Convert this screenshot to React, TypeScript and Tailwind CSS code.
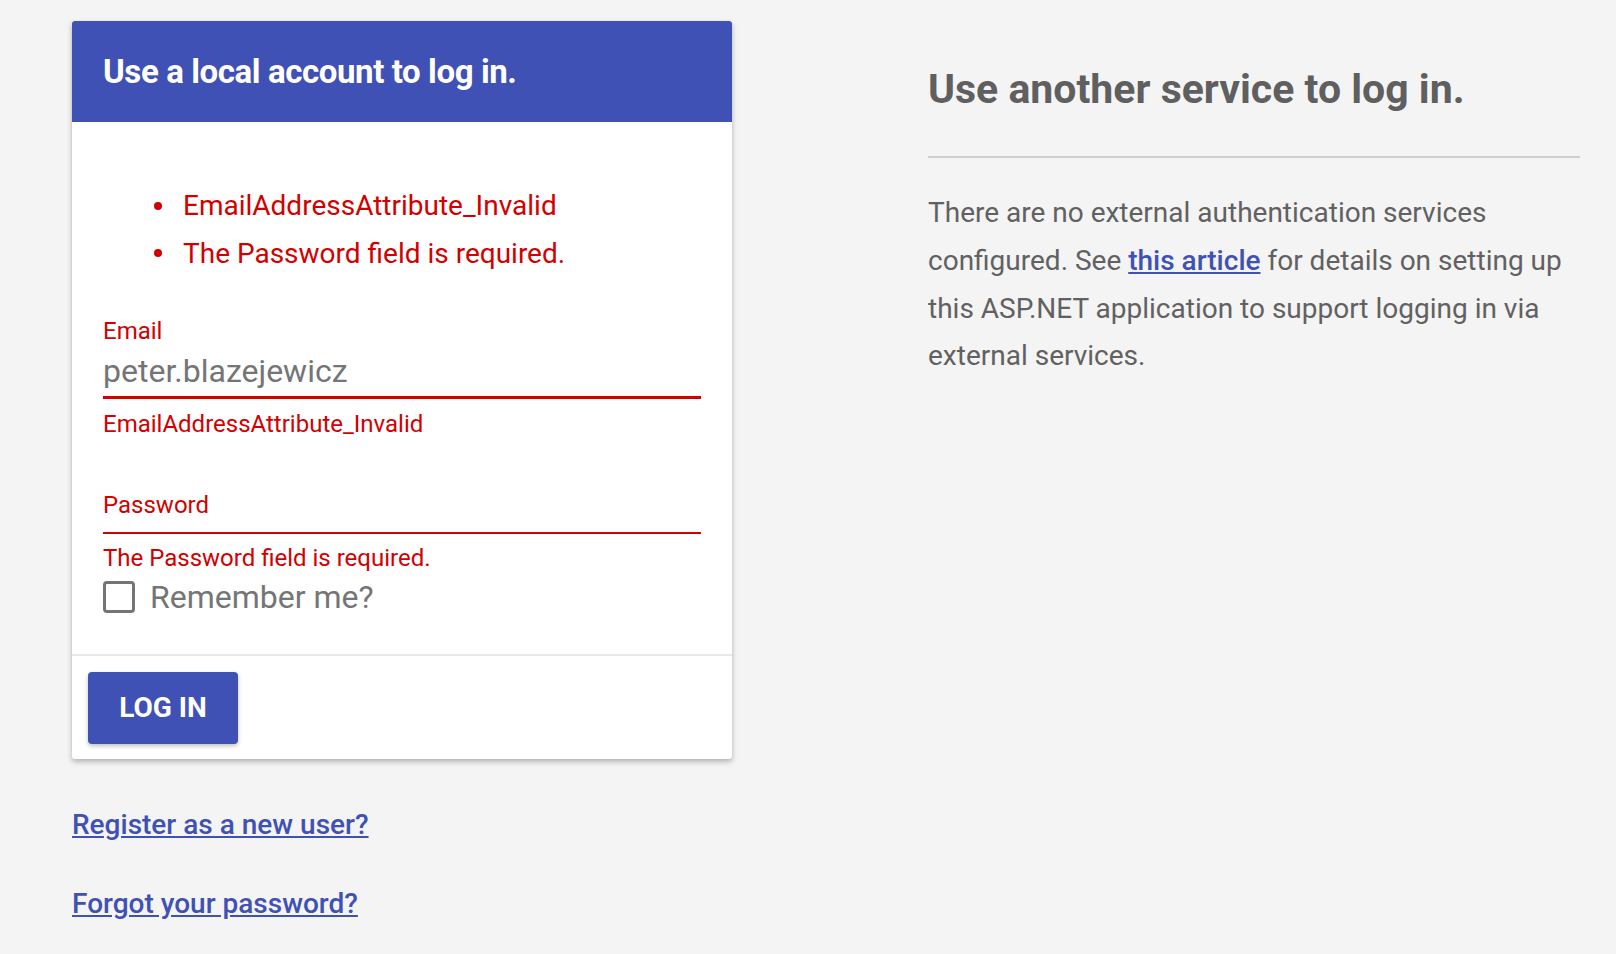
import React, { useEffect, useRef, useState } from 'react';

const errors = ['EmailAddressAttribute_Invalid', 'The Password field is required.'];

export default function App() {
  const [email, setEmail] = useState('peter.blazejewicz');
  const [password, setPassword] = useState('');
  const [remember, setRemember] = useState(false);
  const emailRef = useRef<HTMLInputElement>(null);

  useEffect(() => {
    const el = emailRef.current;
    if (el) {
      el.focus();
      el.setSelectionRange(el.value.length, el.value.length);
    }
  }, []);

  return (
    <div className="min-h-[954px] bg-[#f4f4f4] font-['Roboto',sans-serif]">
      <div className="flex pl-[72px] pt-[21px]">
        {/* local login */}
        <div className="w-[660px] shrink-0">
          <form
            onSubmit={(e) => e.preventDefault()}
            className="bg-white rounded-[3px] shadow-[0_3px_6px_rgba(0,0,0,0.18),0_2px_4px_rgba(0,0,0,0.12)]"
          >
            <div className="h-[101px] bg-[#3f51b5] rounded-t-[3px] flex items-center px-[31px]">
              <h4 className="text-white text-[33px] leading-[40px] font-bold tracking-[-0.4px]">Use a local account to log in.</h4>
            </div>

            <div className="px-[31px] pt-[60px] pb-[40px]">
              <ul className="text-[#d20000] text-[28px] leading-[47.5px]">
                {errors.map((msg) => (
                  <li key={msg} className="flex items-center">
                    <span className="ml-[51px] mr-[21px] w-[8px] h-[8px] rounded-full bg-[#d20000] shrink-0" />
                    {msg}
                  </li>
                ))}
              </ul>

              <div className="mt-[40px] w-[598px]">
                <label className="block text-[#d20000] text-[24px] leading-[28px]">Email</label>
                <div className="relative mt-[6px]">
                  <input
                    ref={emailRef}
                    value={email}
                    onChange={(e) => setEmail(e.target.value)}
                    className="peer block w-full text-[32px] leading-[40px] h-[48px] text-[#757575] caret-[#757575] outline-none border-b-[3px] border-[#d20000] pb-[5px]"
                  />
                </div>
                <p className="text-[#d20000] text-[24px] leading-[28px] mt-[11px]">EmailAddressAttribute_Invalid</p>
              </div>

              <div className="mt-[53px] w-[598px]">
                <label className="block text-[#d20000] text-[24px] leading-[28px]">Password</label>
                <input
                  type="password"
                  value={password}
                  onChange={(e) => setPassword(e.target.value)}
                  className="block w-full h-[15px] outline-none border-b-2 border-[#d20000]"
                />
                <p className="text-[#d20000] text-[24px] leading-[28px] mt-[10px]">The Password field is required.</p>
              </div>

              <label className="flex items-center gap-[15px] mt-[8px] cursor-pointer">
                <input
                  type="checkbox"
                  checked={remember}
                  onChange={(e) => setRemember(e.target.checked)}
                  className="appearance-none w-[32px] h-[32px] border-[3px] border-[#757575] rounded-[4px] checked:bg-[#3f51b5] checked:border-[#3f51b5]"
                />
                <span className="text-[32px] leading-[34px] text-[#757575]">Remember me?</span>
              </label>
            </div>

            <div className="border-t-2 border-[#e8e8e8] px-[16px] pt-[16px] pb-[15px]">
              <button
                type="submit"
                className="w-[150px] h-[72px] bg-[#3f51b5] text-white text-[28px] font-bold rounded-[4px] shadow-[0_2px_4px_rgba(0,0,0,0.25)]"
              >
                LOG IN
              </button>
            </div>
          </form>

          <div className="mt-[50px] flex flex-col gap-[47px] text-[28px] leading-[32px] font-medium">
            <a href="#" className="text-[#3f51b5] underline self-start">Register as a new user?</a>
            <a href="#" className="text-[#3f51b5] underline self-start">Forgot your password?</a>
          </div>
        </div>

        {/* external login */}
        <div className="ml-[196px] w-[652px] shrink-0">
          <h4 className="mt-[44px] text-[41px] leading-[48px] font-bold text-[#5f5f5f]">Use another service to log in.</h4>
          <hr className="mt-[43px] border-0 h-[2px] bg-[#cfcfcf]" />
          <p className="mt-[31px] text-[28px] leading-[47.8px] text-[#616161]">
            There are no external authentication services configured. See{' '}
            <a href="#" className="text-[#3f51b5] underline font-medium">this article</a>{' '}
            for details on setting up this ASP.NET application to support logging in via external services.
          </p>
        </div>
      </div>
    </div>
  );
}
